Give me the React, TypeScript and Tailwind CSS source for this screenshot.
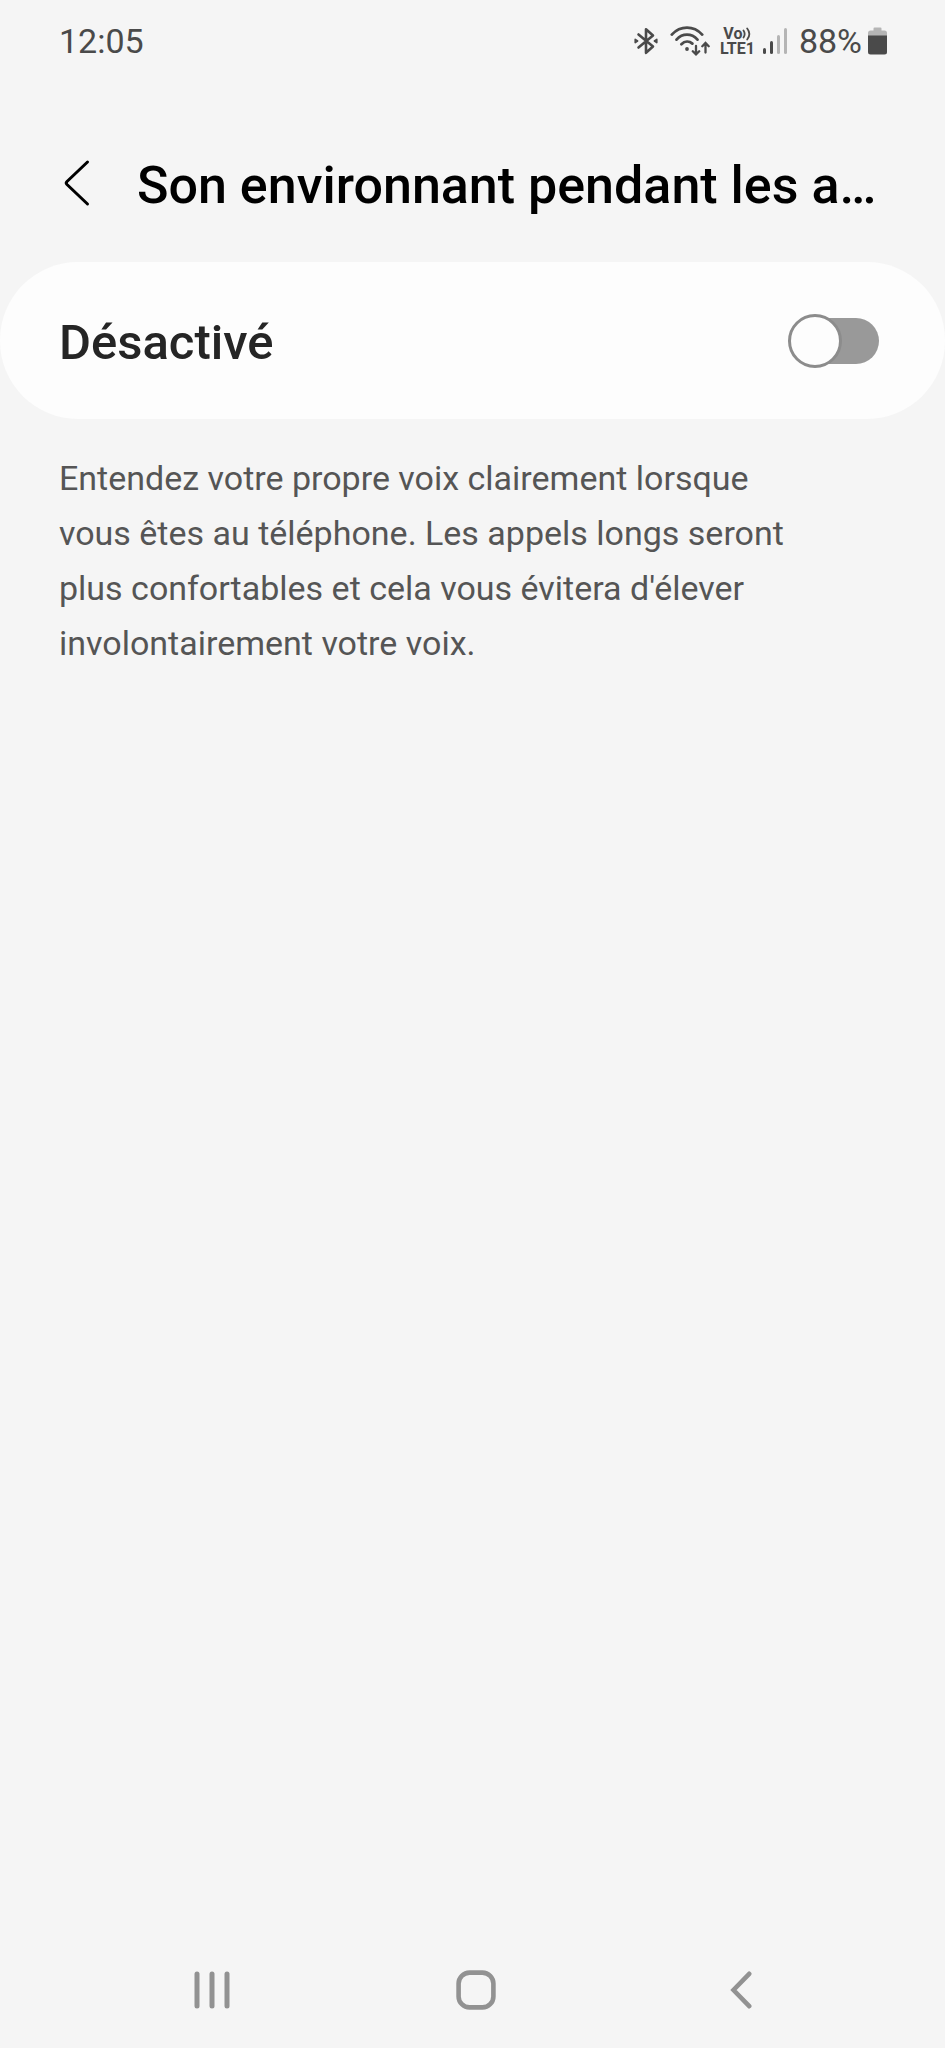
import { useState } from "react";

function BluetoothIcon() {
  return (
    <svg width="24" height="28" viewBox="0 0 24 28" fill="none" stroke="currentColor" strokeWidth="2.6" strokeLinejoin="round" strokeLinecap="round" aria-hidden="true">
      <path d="M4.5 7.5 19 19.5 12 25.8V2.2L19 8.5 4.5 20.5" />
      <path d="M1.2 12.4 3.6 14 1.2 15.6ZM22.8 12.4 20.4 14 22.8 15.6Z" strokeWidth="1.6" fill="currentColor" />
    </svg>
  );
}

function WifiIcon() {
  return (
    <svg width="40" height="30" viewBox="0 0 40 30" fill="none" stroke="currentColor" strokeWidth="2.8" strokeLinecap="round" aria-hidden="true">
      <path d="M1.8 8.6C10.5-.6 23.5-.6 32.2 8.6" />
      <path d="M6.5 13.6C12.5 7 21.5 7 27.5 13.6" />
      <path d="M11.4 18.2C14.8 14.8 19.2 14.8 22.4 17.6" />
      <circle cx="17" cy="23" r="1.9" fill="currentColor" stroke="none" />
      <path d="M26 20V28M22.8 25.2 26 28.4 29.2 25.2M35.5 26.5V17.5M32.3 20.2 35.5 17 38.7 20.2" strokeWidth="2.3" />
    </svg>
  );
}

function SignalIcon() {
  return (
    <svg width="24" height="26" viewBox="0 0 24 26" fill="currentColor" aria-hidden="true">
      <rect x="0" y="20" width="3" height="6" rx="1.5" />
      <rect x="7" y="13" width="3" height="13" rx="1.5" />
      <rect x="14" y="7" width="3" height="19" rx="1.5" fill="#b5b5b5" />
      <rect x="21" y="0" width="3" height="26" rx="1.5" fill="#b5b5b5" />
    </svg>
  );
}

function BatteryIcon() {
  return (
    <svg width="19" height="28" viewBox="0 0 19 28" aria-hidden="true">
      <path d="M5.5 1.5Q5.5.5 6.5.5H12.5Q13.5.5 13.5 1.5V3.5H16.5Q19 3.5 19 6V9H0V6Q0 3.5 2.5 3.5H5.5Z" fill="#b5b5b5" />
      <path d="M0 8.5H19V25Q19 27.5 16.5 27.5H2.5Q0 27.5 0 25Z" fill="#4a4a4a" />
    </svg>
  );
}

function StatusBar() {
  return (
    <header className="flex h-[82px] items-center justify-between pr-[58px] pl-[59px] text-[34px] leading-10 text-[#4a4a4a]">
      <time>12:05</time>
      <div className="flex items-center">
        <BluetoothIcon />
        <div className="ml-3">
          <WifiIcon />
        </div>
        <div className="ml-[10px] flex flex-col text-[16px] leading-[15px] font-bold">
          <span className="flex items-center justify-center">
            Vo
            <svg width="9" height="14" viewBox="0 0 9 14" fill="none" stroke="currentColor" strokeWidth="1.8" strokeLinecap="round" aria-hidden="true">
              <path d="M1.5 3.5Q3.8 7 1.5 10.5M5.2 1.5Q9.5 7 5.2 12.5" />
            </svg>
          </span>
          <span>LTE1</span>
        </div>
        <div className="ml-2">
          <SignalIcon />
        </div>
        <span className="ml-3">88%</span>
        <div className="ml-[6px]">
          <BatteryIcon />
        </div>
      </div>
    </header>
  );
}

function TitleBar() {
  return (
    <div className="flex h-[180px] items-center pt-[22px] pr-[59px] pl-[59px]">
      <button type="button" aria-label="Retour" className="shrink-0 pr-[44px]">
        <svg width="34" height="48" viewBox="0 0 34 48" fill="none" stroke="currentColor" strokeWidth="3" strokeLinecap="round" strokeLinejoin="round" aria-hidden="true">
          <path d="M28.500 3 8 22.500Q6.500 24 8 25.500L28.500 45" />
        </svg>
      </button>
      <h1 className="min-w-0 flex-1 pt-[6px] text-[52px] leading-[64px] font-medium whitespace-nowrap">
        Son environnant pendant les a…
      </h1>
    </div>
  );
}

function SwitchCard() {
  const [on, setOn] = useState(false);
  return (
    <label className="flex h-[157px] cursor-pointer items-center justify-between rounded-[78px] bg-[#fdfdfd] pr-[66px] pl-[59px]">
      <span className="pt-1 text-[49px] leading-[60px] font-medium text-[#252525]">{on ? "Activé" : "Désactivé"}</span>
      <span className="relative flex h-[54px] w-[91px] items-center justify-end">
        <input
          type="checkbox"
          role="switch"
          checked={on}
          onChange={(e) => setOn(e.target.checked)}
          className="peer h-[46px] w-[88px] cursor-pointer appearance-none rounded-full bg-[#999999] checked:bg-[#3e7bf0]"
        />
        <span className="pointer-events-none absolute top-0 left-0 size-[54px] rounded-full border-[3px] border-[#8c8c8c] bg-[#fdfdfd] peer-checked:right-0 peer-checked:left-auto peer-checked:border-[#3e7bf0]" />
      </span>
    </label>
  );
}

function NavBar() {
  return (
    <nav className="grid h-[116px] grid-cols-3 pr-[72px] pl-20 text-[#929292]">
      <button type="button" aria-label="Applications récentes" className="flex items-center justify-center">
        <svg width="36" height="38" viewBox="0 0 36 38" fill="currentColor" aria-hidden="true">
          <rect x="0.5" y="0.5" width="5" height="37" rx="2.5" />
          <rect x="15.5" y="0.5" width="5" height="37" rx="2.5" />
          <rect x="30.5" y="0.5" width="5" height="37" rx="2.5" />
        </svg>
      </button>
      <button type="button" aria-label="Accueil" className="flex items-center justify-center">
        <svg width="40" height="40" viewBox="0 0 40 40" fill="none" stroke="currentColor" strokeWidth="4.6" aria-hidden="true">
          <rect x="2.6" y="2.6" width="34.8" height="34.8" rx="11" />
        </svg>
      </button>
      <button type="button" aria-label="Précédent" className="flex items-center justify-center">
        <svg width="22" height="38" viewBox="0 0 22 38" fill="none" stroke="currentColor" strokeWidth="4.6" strokeLinecap="round" strokeLinejoin="miter" aria-hidden="true">
          <path d="M19.2 2.8 3.5 19 19.2 35.2" />
        </svg>
      </button>
    </nav>
  );
}

export default function App() {
  return (
    <div className="flex min-h-screen flex-col bg-[#f5f5f5] font-['Roboto',sans-serif] text-black">
      <StatusBar />
      <TitleBar />
      <main className="flex-1">
        <SwitchCard />
        <p className="mt-8 max-w-[820px] pr-5 pl-[59px] text-[34px] leading-[55px] text-[#555555]">
          Entendez votre propre voix clairement lorsque vous êtes au téléphone. Les appels longs seront plus
          confortables et cela vous évitera d'élever involontairement votre voix.
        </p>
      </main>
      <NavBar />
    </div>
  );
}
